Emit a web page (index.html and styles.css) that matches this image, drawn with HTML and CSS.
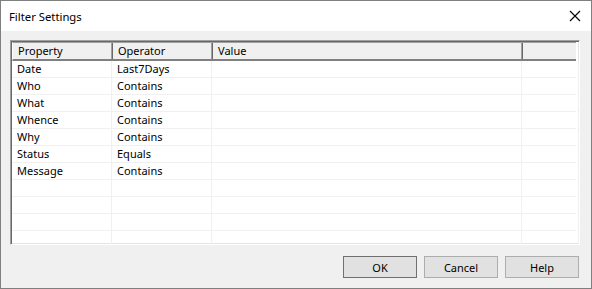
FILE: index.html
```html
<!DOCTYPE html>
<html>
<head>
<meta charset="utf-8">
<link rel="stylesheet" href="styles.css">
</head>
<body>
<div class="window">
  <div class="titlebar">
    <span class="title">Filter Settings</span>
    <svg class="close" width="12" height="12" viewBox="0 0 12 12"><path d="M1 1L11 11M11 1L1 11" stroke="#000" stroke-width="1.1" fill="none"/></svg>
  </div>
  <div class="body">
    <div class="list">
      <div class="header">
        <div class="hcell c1">Property</div>
        <div class="hcell c2">Operator</div>
        <div class="hcell c3">Value</div>
        <div class="hcell c4"></div>
      </div>
      <div class="rows">
        <div class="row"><div class="cell c1">Date</div><div class="cell c2">Last7Days</div><div class="cell c3"></div><div class="cell c4"></div></div>
        <div class="row"><div class="cell c1">Who</div><div class="cell c2">Contains</div><div class="cell c3"></div><div class="cell c4"></div></div>
        <div class="row"><div class="cell c1">What</div><div class="cell c2">Contains</div><div class="cell c3"></div><div class="cell c4"></div></div>
        <div class="row"><div class="cell c1">Whence</div><div class="cell c2">Contains</div><div class="cell c3"></div><div class="cell c4"></div></div>
        <div class="row"><div class="cell c1">Why</div><div class="cell c2">Contains</div><div class="cell c3"></div><div class="cell c4"></div></div>
        <div class="row"><div class="cell c1">Status</div><div class="cell c2">Equals</div><div class="cell c3"></div><div class="cell c4"></div></div>
        <div class="row"><div class="cell c1">Message</div><div class="cell c2">Contains</div><div class="cell c3"></div><div class="cell c4"></div></div>
        <div class="row"><div class="cell c1"></div><div class="cell c2"></div><div class="cell c3"></div><div class="cell c4"></div></div>
        <div class="row"><div class="cell c1"></div><div class="cell c2"></div><div class="cell c3"></div><div class="cell c4"></div></div>
        <div class="row"><div class="cell c1"></div><div class="cell c2"></div><div class="cell c3"></div><div class="cell c4"></div></div>
        <div class="row"><div class="cell c1"></div><div class="cell c2"></div><div class="cell c3"></div><div class="cell c4"></div></div>
      </div>
    </div>
    <div class="buttons">
      <button class="btn default">OK</button>
      <button class="btn">Cancel</button>
      <button class="btn">Help</button>
    </div>
  </div>
</div>
</body>
</html>
```
FILE: styles.css
```css
* { box-sizing: border-box; }
html, body { margin: 0; padding: 0; }
body {
  width: 592px;
  height: 289px;
  font-family: "Noto Sans", "Liberation Sans", sans-serif;
  font-size: 11px;
  color: #000;
  overflow: hidden;
}
.window {
  width: 592px;
  height: 289px;
  border: 1px solid #7f7f7f;
  background: #f0f0f0;
  display: flex;
  flex-direction: column;
}
.titlebar {
  height: 30px;
  background: #fff;
  display: flex;
  align-items: center;
  justify-content: space-between;
  padding: 0 9px 0 8px;
}
.title { font-size: 11.3px; }
.close { display: block; margin-right: 1px; }
.body {
  flex: 1;
  padding: 9px 11px 0 9px;
  display: flex;
  flex-direction: column;
}
.list {
  height: 205px;
  background: #fff;
  border-top: 1px solid #a0a0a0;
  border-left: 1px solid #a0a0a0;
  border-right: 1px solid #fff;
  border-bottom: 1px solid #fff;
  box-shadow: inset 1px 1px 0 #696969, inset -1px -1px 0 #e3e3e3;
  padding: 1px 3px 1px 1px;
  overflow: hidden;
}
.header {
  display: flex;
  height: 19px;
  background: #f0f0f0;
  border-top: 1px solid #a0a0a0;
  border-bottom: 2px solid #808080;
  border-left: 1px solid #fff;
}
.hcell {
  height: 100%;
  padding-left: 5px;
  line-height: 16px;
  border-right: 1px solid #696969;
  box-shadow: inset -1px 0 0 #a0a0a0;
}
.hcell.c4 { border-right: 1px solid #696969; box-shadow: none; }
.c1 { width: 100px; flex: none; }
.c2 { width: 100px; flex: none; }
.c3 { width: 310px; flex: none; }
.c4 { width: 57px; flex: none; }
.row {
  display: flex;
  height: 17px;
  border-bottom: 1px solid #f0f0f0;
}
.cell {
  height: 100%;
  padding-left: 5px;
  line-height: 16px;
  border-right: 1px solid #f0f0f0;
}
.buttons {
  display: flex;
  justify-content: flex-end;
  gap: 7px;
  margin-top: 11px;
  margin-right: 1px;
}
.btn {
  width: 74px;
  height: 22px;
  font-family: "Noto Sans", "Liberation Sans", sans-serif;
  font-size: 11px;
  color: #000;
  background: #e1e1e1;
  border: 1px solid #adadad;
  padding: 0;
}
.btn.default { border-color: #707070; }
```
